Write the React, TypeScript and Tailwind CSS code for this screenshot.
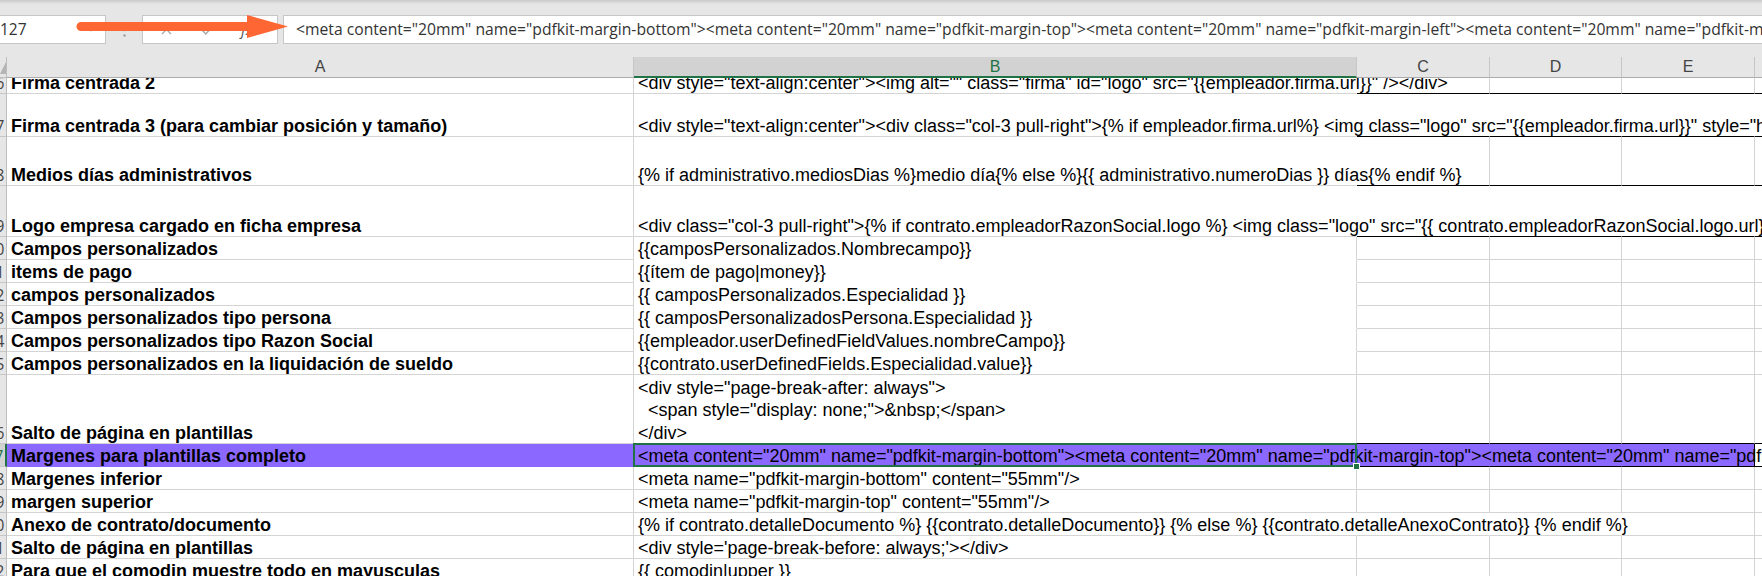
import React from 'react';

type Row = {
  n: number;
  h: string;
  a: string;
  b: string[];
  ov?: number; // how many columns after B the text runs into
  blk?: boolean; // black bottom border on C:F
  noB?: boolean; // B filled white, no bottom gridline
  sel?: boolean;
};

const META =
  '<meta content="20mm" name="pdfkit-margin-bottom"><meta content="20mm" name="pdfkit-margin-top"><meta content="20mm" name="pdfkit-margin-left"><meta content="20mm" name="pdfkit-margin-right">';

const rows: Row[] = [
  { n: 116, h: 'h-[23px]', a: 'Firma centrada 2', b: ['<div style="text-align:center"><img alt="" class="firma" id="logo" src="{{empleador.firma.url}}" /></div>'], ov: 1, blk: true },
  { n: 117, h: 'h-[43px]', a: 'Firma centrada 3 (para cambiar posición y tamaño)', b: ['<div style="text-align:center"><div class="col-3 pull-right">{% if empleador.firma.url%} <img class="logo" src="{{empleador.firma.url}}" style="height:80px" /> {% endif %}</div></div>'], ov: 5, blk: true },
  { n: 118, h: 'h-[49px]', a: 'Medios días administrativos', b: ['{% if administrativo.mediosDias %}medio día{% else %}{{ administrativo.numeroDias }} días{% endif %}'], ov: 1, blk: true },
  { n: 119, h: 'h-[51px]', a: 'Logo empresa cargado en ficha empresa', b: ['<div class="col-3 pull-right">{% if contrato.empleadorRazonSocial.logo %} <img class="logo" src="{{ contrato.empleadorRazonSocial.logo.url}}" /> {% endif %}</div>'], ov: 5, blk: true },
  { n: 120, h: 'h-[23px]', a: 'Campos personalizados', b: ['{{camposPersonalizados.Nombrecampo}}'], noB: true },
  { n: 121, h: 'h-[23px]', a: 'items de pago', b: ['{{ítem de pago|money}}'], noB: true },
  { n: 122, h: 'h-[23px]', a: 'campos personalizados', b: ['{{ camposPersonalizados.Especialidad }}'], noB: true },
  { n: 123, h: 'h-[23px]', a: 'Campos personalizados tipo persona', b: ['{{ camposPersonalizadosPersona.Especialidad }}'], noB: true },
  { n: 124, h: 'h-[23px]', a: 'Campos personalizados tipo Razon Social', b: ['{{empleador.userDefinedFieldValues.nombreCampo}}'], noB: true },
  { n: 125, h: 'h-[23px]', a: 'Campos personalizados en la liquidación de sueldo', b: ['{{contrato.userDefinedFields.Especialidad.value}}'] },
  { n: 126, h: 'h-[69px]', a: 'Salto de página en plantillas', b: ['<div style="page-break-after: always">', '  <span style="display: none;">&nbsp;</span>', '</div>'], blk: true },
  { n: 127, h: 'h-[23px]', a: 'Margenes para plantillas completo', b: [META], ov: 4, blk: true, sel: true },
  { n: 128, h: 'h-[23px]', a: 'Margenes inferior', b: ['<meta name="pdfkit-margin-bottom" content="55mm"/>'] },
  { n: 129, h: 'h-[23px]', a: 'margen superior', b: ['<meta name="pdfkit-margin-top" content="55mm"/>'] },
  { n: 130, h: 'h-[23px]', a: 'Anexo de contrato/documento', b: ['{% if contrato.detalleDocumento %} {{contrato.detalleDocumento}} {% else %} {{contrato.detalleAnexoContrato}} {% endif %}'], ov: 3 },
  { n: 131, h: 'h-[23px]', a: 'Salto de página en plantillas', b: ["<div style='page-break-before: always;'></div>"] },
  { n: 132, h: 'h-[23px]', a: 'Para que el comodin muestre todo en mayusculas', b: ['{{ comodin|upper }}'] },
];

const uiFont = "font-['Segoe_UI','Open_Sans',sans-serif]";

const Toolbar: React.FC = () => (
  <div className="relative h-[57px] bg-[#e6e6e6]">
    <div className="h-[4px] bg-gradient-to-b from-[#c9c9c9] to-[#e6e6e6]" />
    <div className="mt-[11px] flex h-[29px] items-stretch">
      {/* name box */}
      <div className="-ml-px flex w-[107px] items-center justify-between border border-[#c6c6c6] bg-white pr-[10px]">
        <span className={`${uiFont} text-[15.5px] text-[#333]`}>127</span>
        <svg width="8" height="5" viewBox="0 0 8 5">
          <path d="M0 0 L4 4.5 L8 0 Z" fill="#666" />
        </svg>
      </div>
      <div className="flex w-[36px] items-center justify-center">
        <svg width="3" height="14" viewBox="0 0 3 14">
          <circle cx="1.5" cy="1.5" r="1.2" fill="#9d9d9d" />
          <circle cx="1.5" cy="7" r="1.2" fill="#9d9d9d" />
          <circle cx="1.5" cy="12.5" r="1.2" fill="#9d9d9d" />
        </svg>
      </div>
      {/* cancel / enter / fx */}
      <div className="flex w-[136px] items-center border border-[#c6c6c6] bg-white">
        <div className="flex w-[46px] justify-center">
          <svg width="11" height="11" viewBox="0 0 11 11">
            <path d="M1 1 L10 10 M10 1 L1 10" stroke="#a8a8a8" strokeWidth="1.4" />
          </svg>
        </div>
        <div className="flex w-[36px] justify-center">
          <svg width="13" height="10" viewBox="0 0 13 10">
            <path d="M1 5 L4.8 9 L12 1" stroke="#a8a8a8" strokeWidth="1.4" fill="none" />
          </svg>
        </div>
        <div className={`flex w-[44px] justify-center ${uiFont} text-[15px] italic text-[#555]`}>fx</div>
      </div>
      {/* formula bar */}
      <div className="-mr-px ml-[5px] flex min-w-0 flex-1 items-center overflow-hidden border border-[#c6c6c6] bg-white pl-[12px]">
        <span className={`whitespace-nowrap ${uiFont} text-[15.7px] text-[#333]`}>{META}</span>
      </div>
    </div>
    {/* orange callout arrow */}
    <svg className="absolute left-0 top-0" width="300" height="50" viewBox="0 0 300 50">
      <line x1="81" y1="26.5" x2="252" y2="26.5" stroke="#fe6633" strokeWidth="9" strokeLinecap="round" />
      <polygon points="247,15 288,26.5 247,38" fill="#fe6633" />
    </svg>
  </div>
);

const Headers: React.FC = () => (
  <div className="flex h-[21px] bg-[#e6e6e6] font-['Liberation_Sans',Arial,sans-serif] text-[16px] text-[#444]">
    <div className="relative w-[7px] shrink-0 border-r border-b border-[#bdbdbd]">
      <svg className="absolute bottom-[3px] left-0" width="6" height="12" viewBox="0 0 6 12">
        <path d="M6 0 L6 12 L0 12 Z" fill="#b4b4b4" />
      </svg>
    </div>
    <div className="flex w-[627px] shrink-0 items-center justify-center border-r border-b border-r-[#c6c6c6] border-b-[#ababab]">A</div>
    <div className="flex w-[723px] shrink-0 items-center justify-center border-b-2 border-r border-b-[#217346] border-r-[#c6c6c6] bg-[#d2d2d2] text-[#217346]">B</div>
    <div className="flex w-[133px] shrink-0 items-center justify-center border-r border-b border-r-[#c6c6c6] border-b-[#ababab]">C</div>
    <div className="flex w-[132px] shrink-0 items-center justify-center border-r border-b border-r-[#c6c6c6] border-b-[#ababab]">D</div>
    <div className="flex w-[133px] shrink-0 items-center justify-center border-r border-b border-r-[#c6c6c6] border-b-[#ababab]">E</div>
    <div className="flex-1 border-b border-b-[#ababab]" />
  </div>
);

const SheetRow: React.FC<{ r: Row }> = ({ r }) => {
  const ov = r.ov ?? 0;
  const fill = r.sel ? 'bg-[#8b68ff]' : '';
  const bottomCF = r.blk ? 'border-b-black' : 'border-b-[#d4d4d4]';
  const sideLine = (hidden: boolean) => (hidden ? 'border-r-transparent' : 'border-r-[#d4d4d4]');
  const multi = r.b.length > 1;

  return (
    <div className={`flex ${r.h}`}>
      <div
        className={`flex w-[7px] shrink-0 items-end justify-end overflow-hidden border-b border-b-[#c6c6c6] ${
          r.sel ? 'border-r-2 border-r-[#217346] bg-[#d2d2d2] text-[#217346]' : 'border-r border-r-[#bdbdbd] bg-[#e6e6e6] text-[#444]'
        }`}
      >
        <div className={`w-[30px] shrink-0 text-center ${uiFont} text-[15.5px] leading-[20px]`}>{r.n}</div>
      </div>

      <div
        className={`flex w-[627px] shrink-0 items-end overflow-hidden border-r border-b pl-[4px] font-bold whitespace-nowrap ${fill} ${
          r.sel ? 'border-transparent' : 'border-b-[#d4d4d4] border-r-[#d4d4d4]'
        }`}
      >
        <span className="leading-[19px]">{r.a}</span>
      </div>

      <div
        className={`relative flex w-[723px] shrink-0 flex-col justify-end border-r border-b pl-[4px] ${fill} ${
          r.noB ? 'border-b-white' : 'border-b-[#d4d4d4]'
        } ${sideLine(ov >= 1)}`}
      >
        <div className={multi ? '-mb-px' : ''}>
          {r.b.map((line, i) => (
            <div key={i} className={`relative z-10 whitespace-pre ${multi ? 'leading-[22.5px]' : 'leading-[19px]'}`}>
              {line}
            </div>
          ))}
        </div>
        {r.sel && (
          <>
            <div className="pointer-events-none absolute -top-px -right-px -bottom-px -left-px z-20 border-2 border-[#217346]" />
            <div className="absolute -right-[4px] -bottom-[4px] z-30 h-[7px] w-[7px] border border-white bg-[#217346]" />
          </>
        )}
      </div>

      <div className={`w-[133px] shrink-0 border-r border-b ${fill} ${bottomCF} ${sideLine(ov >= 2)}`} />
      <div className={`w-[132px] shrink-0 border-r border-b ${fill} ${bottomCF} ${sideLine(ov >= 3)}`} />
      <div
        className={`w-[133px] shrink-0 border-r border-b ${fill} ${bottomCF} ${
          r.sel ? 'border-r-black' : sideLine(ov >= 4)
        }`}
      />
      <div className={`flex-1 border-b bg-white ${bottomCF}`} />
    </div>
  );
};

export default function App() {
  return (
    <div className="h-[576px] w-[1762px] overflow-hidden bg-white font-['Liberation_Sans',Arial,sans-serif] text-[18px] text-black">
      <Toolbar />
      <Headers />
      <div className="h-[498px] overflow-hidden">
        <div className="-mt-[7px]">
          {rows.map((r) => (
            <SheetRow key={r.n} r={r} />
          ))}
        </div>
      </div>
    </div>
  );
}
